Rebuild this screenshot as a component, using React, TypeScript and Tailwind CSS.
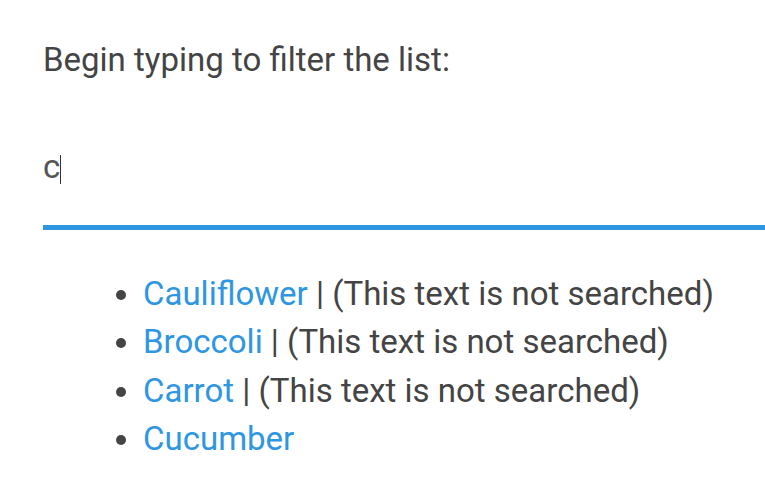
import { useState } from "react";

const items = [
  { name: "Cauliflower", note: true },
  { name: "Broccoli", note: true },
  { name: "Carrot", note: true },
  { name: "Cucumber", note: false },
];

export default function App() {
  const [query, setQuery] = useState("c");

  return (
    <div className="min-h-screen bg-white pl-[43px] pt-[40px] font-['Roboto',sans-serif] text-[#444]">
      <p className="text-[33px] leading-[40px]">Begin typing to filter the list:</p>

      <div className="relative mt-[66px]">
        <input
          autoFocus
          value={query}
          onChange={(e) => setQuery(e.target.value)}
          className="block h-[84px] w-full border-b-[5px] border-[#2f96e1] bg-transparent pb-[39px] text-[33px] leading-[40px] text-[#555] caret-transparent outline-none"
        />
        {/* fake caret, the headless shot has no focus blink */}
        <span className="pointer-events-none absolute left-[17px] top-[9px] h-[29px] w-px bg-[#333]" />
      </div>

      <ul className="mt-[40px] list-disc pl-[100px] text-[33px] leading-[48.33px] marker:text-[#444]">
        {items.map((item) => (
          <li key={item.name}>
            <a href="#" className="text-[#2f96e1]">
              {item.name}
            </a>
            {item.note && " | (This text is not searched)"}
          </li>
        ))}
      </ul>
    </div>
  );
}
